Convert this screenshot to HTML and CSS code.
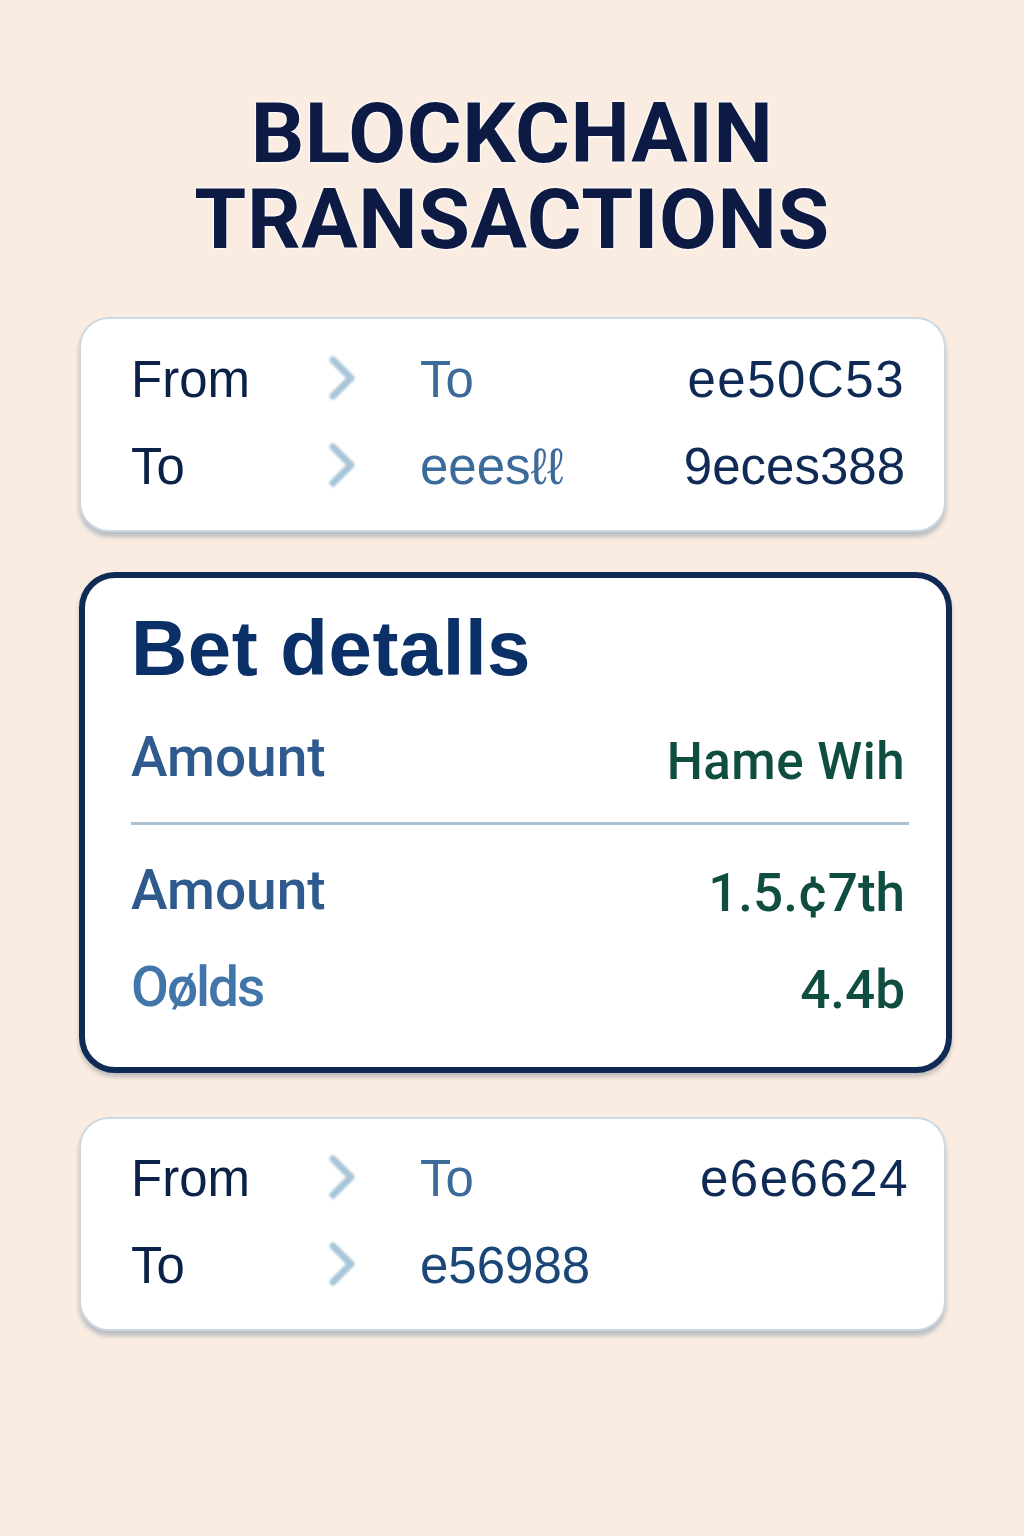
FILE: index.html
```html
<!DOCTYPE html>
<html lang="en">
<head>
<meta charset="utf-8">
<title>Blockchain Transactions</title>
<link rel="stylesheet" href="styles.css">
</head>
<body>
<main class="page">
  <h1 class="title">BLOCKCHAIN<br>TRANSACTIONS</h1>

  <section class="tx-card tx-card--first">
    <div class="tx-row">
      <span class="tx-label">From</span>
      <svg class="chev" viewBox="0 0 28 46" width="28" height="46"><polyline points="5,5 23,23 5,41"/></svg>
      <span class="tx-mid">To</span>
      <span class="tx-val tx-val--wide">ee50C53</span>
    </div>
    <div class="tx-row">
      <span class="tx-label">To</span>
      <svg class="chev" viewBox="0 0 28 46" width="28" height="46"><polyline points="5,5 23,23 5,41"/></svg>
      <span class="tx-mid">eeesℓℓ</span>
      <span class="tx-val">9eces388</span>
    </div>
  </section>

  <section class="bet-card">
    <h2 class="bet-title">Bet detalls</h2>
    <div class="bet-row bet-row--top">
      <span class="bet-label">Amount</span>
      <span class="bet-val bet-val--small">Hame Wih</span>
    </div>
    <hr class="bet-divider">
    <div class="bet-row">
      <span class="bet-label">Amount</span>
      <span class="bet-val">1.5.¢7th</span>
    </div>
    <div class="bet-row">
      <span class="bet-label bet-label--soft">Oølds</span>
      <span class="bet-val">4.4b</span>
    </div>
  </section>

  <section class="tx-card tx-card--last">
    <div class="tx-row">
      <span class="tx-label">From</span>
      <svg class="chev" viewBox="0 0 28 46" width="28" height="46"><polyline points="5,5 23,23 5,41"/></svg>
      <span class="tx-mid">To</span>
      <span class="tx-val tx-val--wide">e6e6624</span>
    </div>
    <div class="tx-row">
      <span class="tx-label">To</span>
      <svg class="chev" viewBox="0 0 28 46" width="28" height="46"><polyline points="5,5 23,23 5,41"/></svg>
      <span class="tx-mid tx-mid--dark">e56988</span>
      <span class="tx-val"></span>
    </div>
  </section>
</main>
</body>
</html>
```

FILE: styles.css
```css
* { box-sizing: border-box; }

html, body {
  margin: 0;
  padding: 0;
}

body {
  width: 1024px;
  min-height: 1536px;
  background: #faece0;
  font-family: "Liberation Sans", Arial, sans-serif;
}

.page {
  display: flex;
  flex-direction: column;
  padding: 91px 0 0 79px;
}

.title {
  margin: 0 79px 54px 0;
  font-family: Roboto, "Liberation Sans", sans-serif;
  font-weight: 700;
  font-size: 84px;
  line-height: 86px;
  text-align: center;
  color: #0d1a44;
  letter-spacing: 0.6px;
  text-shadow: 0 0 3px #fff, 0 0 3px #fff, 0 0 2px #fff;
}

/* transaction cards */
.tx-card {
  width: 867px;
  background: #ffffff;
  border: 2px solid #cdd9e2;
  border-radius: 30px;
  box-shadow: 0 5px 4px rgba(110, 135, 160, 0.45);
  padding: 17px 39px 20px 50px;
}

.tx-card--last {
  margin-top: 44px;
  padding-top: 16px;
  padding-right: 35px;
}

.tx-row {
  display: grid;
  grid-template-columns: 197px 92px 1fr auto;
  align-items: center;
  height: 87px;
  line-height: 87px;
  font-size: 51px;
}

.tx-label { color: #0c2147; }

.chev {
  display: block;
  fill: none;
  stroke: #a9c6d9;
  stroke-width: 7;
  stroke-linecap: round;
  stroke-linejoin: round;
  filter: blur(0.8px);
  margin-top: -4px;
}

.tx-mid {
  color: #3c6b9b;
}

.tx-mid--dark { color: #1b4677; }

.tx-val {
  color: #0f2b55;
  text-align: right;
}

.tx-val--wide { letter-spacing: 1.5px; }

/* bet card */
.bet-card {
  margin-top: 40px;
  width: 873px;
  background: #ffffff;
  border: 6px solid #0f2a54;
  border-radius: 36px;
  box-shadow: 0 4px 4px rgba(90, 100, 120, 0.35);
  padding: 31px 41px 48px 46px;
  display: flex;
  flex-direction: column;
}

.bet-title {
  margin: 0;
  font-family: "Liberation Sans", Arial, sans-serif;
  font-weight: 700;
  font-size: 78px;
  line-height: 78px;
  color: #0b3068;
  letter-spacing: 0.5px;
}

.bet-row {
  display: flex;
  justify-content: space-between;
  align-items: baseline;
  height: 64px;
  line-height: 64px;
  margin-top: 33px;
  font-family: Roboto, "Liberation Sans", sans-serif;
  font-weight: 500;
}

.bet-row--top { margin-top: 38px; }

.bet-label {
  font-size: 55px;
  color: #2e5a8e;
}

.bet-label--soft {
  color: #4275aa;
  filter: blur(0.6px);
  letter-spacing: -2px;
}

.bet-val {
  font-size: 53px;
  color: #0e4d3f;
  position: relative;
  top: 2px;
}

.bet-val--small {
  font-size: 51px;
  top: 3px;
  letter-spacing: 0.5px;
}

.bet-divider {
  margin: 33px 0 0 0;
  border: 0;
  height: 3px;
  background: #a9c1d2;
  width: 778px;
}
```
